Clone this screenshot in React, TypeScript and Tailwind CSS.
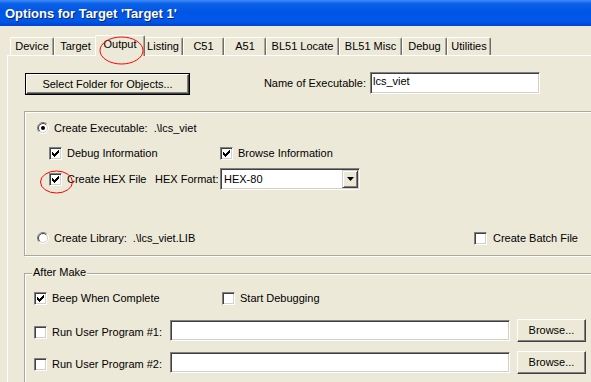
import type { ReactNode } from "react";

const tabs = [
  { name: "Device", w: "w-[44px]" },
  { name: "Target", w: "w-[43px]" },
  { name: "Output", w: "w-[50px]", active: true },
  { name: "Listing", w: "w-[40px]" },
  { name: "C51", w: "w-[41px]" },
  { name: "A51", w: "w-[42px]" },
  { name: "BL51 Locate", w: "w-[73px]" },
  { name: "BL51 Misc", w: "w-[63px]" },
  { name: "Debug", w: "w-[45px]" },
  { name: "Utilities", w: "w-[44px]" },
];

function Check({ checked = false }: { checked?: boolean }) {
  return (
    <div className="relative h-[13px] w-[13px] shrink-0 border border-t-[#808080] border-l-[#808080] border-b-white border-r-white bg-white shadow-[inset_1px_1px_0_#404040,inset_-1px_-1px_0_#d4d0c8]">
      {checked && (
        <svg className="absolute left-[2px] top-[2px]" width="7" height="7" viewBox="0 0 7 7">
          <path d="M0 2h1v1h1v1h1v-1h1v-1h1v-1h1v-1h1v3h-1v1h-1v1h-1v1h-1v1h-1v-1h-1v-1h-1z" fill="#000" />
        </svg>
      )}
    </div>
  );
}

function Radio({ checked = false }: { checked?: boolean }) {
  return (
    <svg className="shrink-0" width="12" height="12" viewBox="0 0 12 12">
      <circle cx="6" cy="6" r="5" fill="#fff" />
      <path d="M2.1 9.9A5.5 5.5 0 0 1 9.9 2.1" stroke="#808080" fill="none" />
      <path d="M9.9 2.1A5.5 5.5 0 0 1 2.1 9.9" stroke="#fff" fill="none" />
      <path d="M2.8 9.2A4.5 4.5 0 0 1 9.2 2.8" stroke="#404040" fill="none" />
      <path d="M9.2 2.8A4.5 4.5 0 0 1 2.8 9.2" stroke="#d4d0c8" fill="none" />
      {checked && <circle cx="6" cy="6" r="2" fill="#000" />}
    </svg>
  );
}

function Button({ className = "", children }: { className?: string; children: ReactNode }) {
  return (
    <div
      className={`flex items-center justify-center bg-[#ece9d8] border border-t-white border-l-white border-b-[#404040] border-r-[#404040] shadow-[inset_-1px_-1px_0_#808080] ${className}`}
    >
      {children}
    </div>
  );
}

function Input({ className = "", value = "" }: { className?: string; value?: string }) {
  return (
    <div
      className={`bg-white pl-[2px] pt-[2px] border border-t-[#808080] border-l-[#808080] border-b-white border-r-white shadow-[inset_1px_1px_0_#404040,inset_-1px_-1px_0_#d4d0c8] ${className}`}
    >
      {value}
    </div>
  );
}

function Select() {
  return (
    <div className="flex h-[22px] w-[140px] items-center justify-between bg-white pl-[3px] pr-[1px] border border-t-[#808080] border-l-[#808080] border-b-white border-r-white shadow-[inset_1px_1px_0_#404040,inset_-1px_-1px_0_#d4d0c8]">
      <span>HEX-80</span>
      <div className="flex h-[18px] w-[16px] items-center justify-center bg-[#ece9d8] border border-t-[#d4d0c8] border-l-[#d4d0c8] border-b-[#404040] border-r-[#404040] shadow-[inset_1px_1px_0_#fff,inset_-1px_-1px_0_#808080]">
        <svg width="7" height="4" viewBox="0 0 7 4">
          <path d="M0 0h7L3.5 4z" fill="#000" />
        </svg>
      </div>
    </div>
  );
}

function Labeled({ children, box, gap = "ml-[5px]" }: { children: ReactNode; box: ReactNode; gap?: string }) {
  return (
    <div className="flex items-center">
      {box}
      <span className={`${gap} whitespace-pre`}>{children}</span>
    </div>
  );
}

export default function App() {
  return (
    <div className="relative h-[382px] w-[591px] overflow-hidden bg-[#ece9d8] font-['Liberation_Sans',Arial,sans-serif] text-[11px] leading-[13px] text-black">
      {/* title bar */}
      <div className="flex h-[26px] items-center pl-[5px] text-[13px] font-bold text-white [text-shadow:1px_1px_0_#0a246a] bg-[linear-gradient(180deg,#3d8cf6_0%,#0c60e8_14%,#0055e5_45%,#0058ea_80%,#0044d0_100%)]">
        Options for Target 'Target 1'
      </div>

      {/* tabs */}
      <div className="flex h-[29px] items-end pl-[10px]">
        {tabs.map((t) =>
          t.active ? (
            <div
              key={t.name}
              className={`relative z-10 -mx-[2px] -mb-px flex h-[21px] items-center justify-center rounded-t-[2px] pb-[3px] bg-[#ece9d8] border-l border-t border-r border-l-white border-t-white border-r-[#716f64] shadow-[inset_-1px_0_0_#aca899] ${t.w}`}
            >
              {t.name}
            </div>
          ) : (
            <div
              key={t.name}
              className={`flex h-[18px] items-center justify-center rounded-t-[2px] bg-[#ece9d8] border-l border-t border-r border-l-white border-t-white border-r-[#716f64] shadow-[inset_-1px_0_0_#aca899] ${t.w}`}
            >
              {t.name}
            </div>
          )
        )}
      </div>

      {/* tab panel */}
      <div className="ml-[7px] h-[400px] w-[600px] border-l border-t border-white">
        <div className="ml-[17px] mt-[16px] flex items-start">
          <div className="mt-[1px] h-[22px] w-[165px] border border-black">
            <Button className="h-full w-full">Select Folder for Objects...</Button>
          </div>
          <div className="w-[176px] text-right leading-[22px]">Name of Executable:</div>
          <Input className="ml-[4px] h-[22px] w-[170px]" value="lcs_viet" />
        </div>

        {/* output group */}
        <div className="ml-[16px] mt-[16px] h-[145px] w-[600px] border border-[#aca899] shadow-[inset_1px_1px_0_#fff,1px_1px_0_#fff]">
          <div className="mt-[9px] flex h-[14px] items-center pl-[12px]">
            <Labeled box={<Radio checked />}>{"Create Executable:  .\\lcs_viet"}</Labeled>
          </div>
          <div className="mt-[12px] flex h-[13px] items-center pl-[24px]">
            <div className="w-[171px]">
              <Labeled box={<Check checked />}>Debug Information</Labeled>
            </div>
            <Labeled box={<Check checked />}>Browse Information</Labeled>
          </div>
          <div className="mt-[8px] flex h-[22px] items-center pl-[24px]">
            <div className="w-[106px]">
              <Labeled box={<Check checked />}>Create HEX File</Labeled>
            </div>
            <div className="w-[65px]">HEX Format:</div>
            <Select />
          </div>
          <div className="mt-[41px] flex h-[14px] items-center pl-[12px]">
            <div className="w-[437px]">
              <Labeled box={<Radio />}>{"Create Library:  .\\lcs_viet.LIB"}</Labeled>
            </div>
            <Labeled box={<Check />} gap="ml-[6px]">
              Create Batch File
            </Labeled>
          </div>
        </div>

        {/* after make group */}
        <div className="relative ml-[16px] mt-[17px] h-[200px] w-[600px] border border-[#aca899] shadow-[inset_1px_1px_0_#fff,1px_1px_0_#fff]">
          <div className="absolute -top-[8px] left-[7px] bg-[#ece9d8] px-[1px]">After Make</div>
          <div className="mt-[18px] flex h-[13px] items-center pl-[9px]">
            <div className="w-[188px]">
              <Labeled box={<Check checked />}>Beep When Complete</Labeled>
            </div>
            <Labeled box={<Check />}>Start Debugging</Labeled>
          </div>
          {["Run User Program #1:", "Run User Program #2:"].map((label, i) => (
            <div key={label} className={`flex items-start pl-[9px] ${i === 0 ? "mt-[14px]" : "mt-[9px]"}`}>
              <div className="mt-[7px] flex h-[13px] w-[136px] items-center">
                <Labeled box={<Check />}>{label}</Labeled>
              </div>
              <Input className="mt-[1px] h-[21px] w-[340px]" />
              <Button className="ml-[7px] h-[23px] w-[69px]">Browse...</Button>
            </div>
          ))}
        </div>
      </div>

      {/* red annotation marks */}
      <svg className="pointer-events-none absolute left-0 top-0 z-20" width="591" height="382">
        <ellipse cx="121.5" cy="50.5" rx="21.5" ry="13.5" fill="none" stroke="#f00" strokeWidth="1" />
        <ellipse cx="56.5" cy="182" rx="16" ry="11" fill="none" stroke="#f00" strokeWidth="1" />
      </svg>
    </div>
  );
}
